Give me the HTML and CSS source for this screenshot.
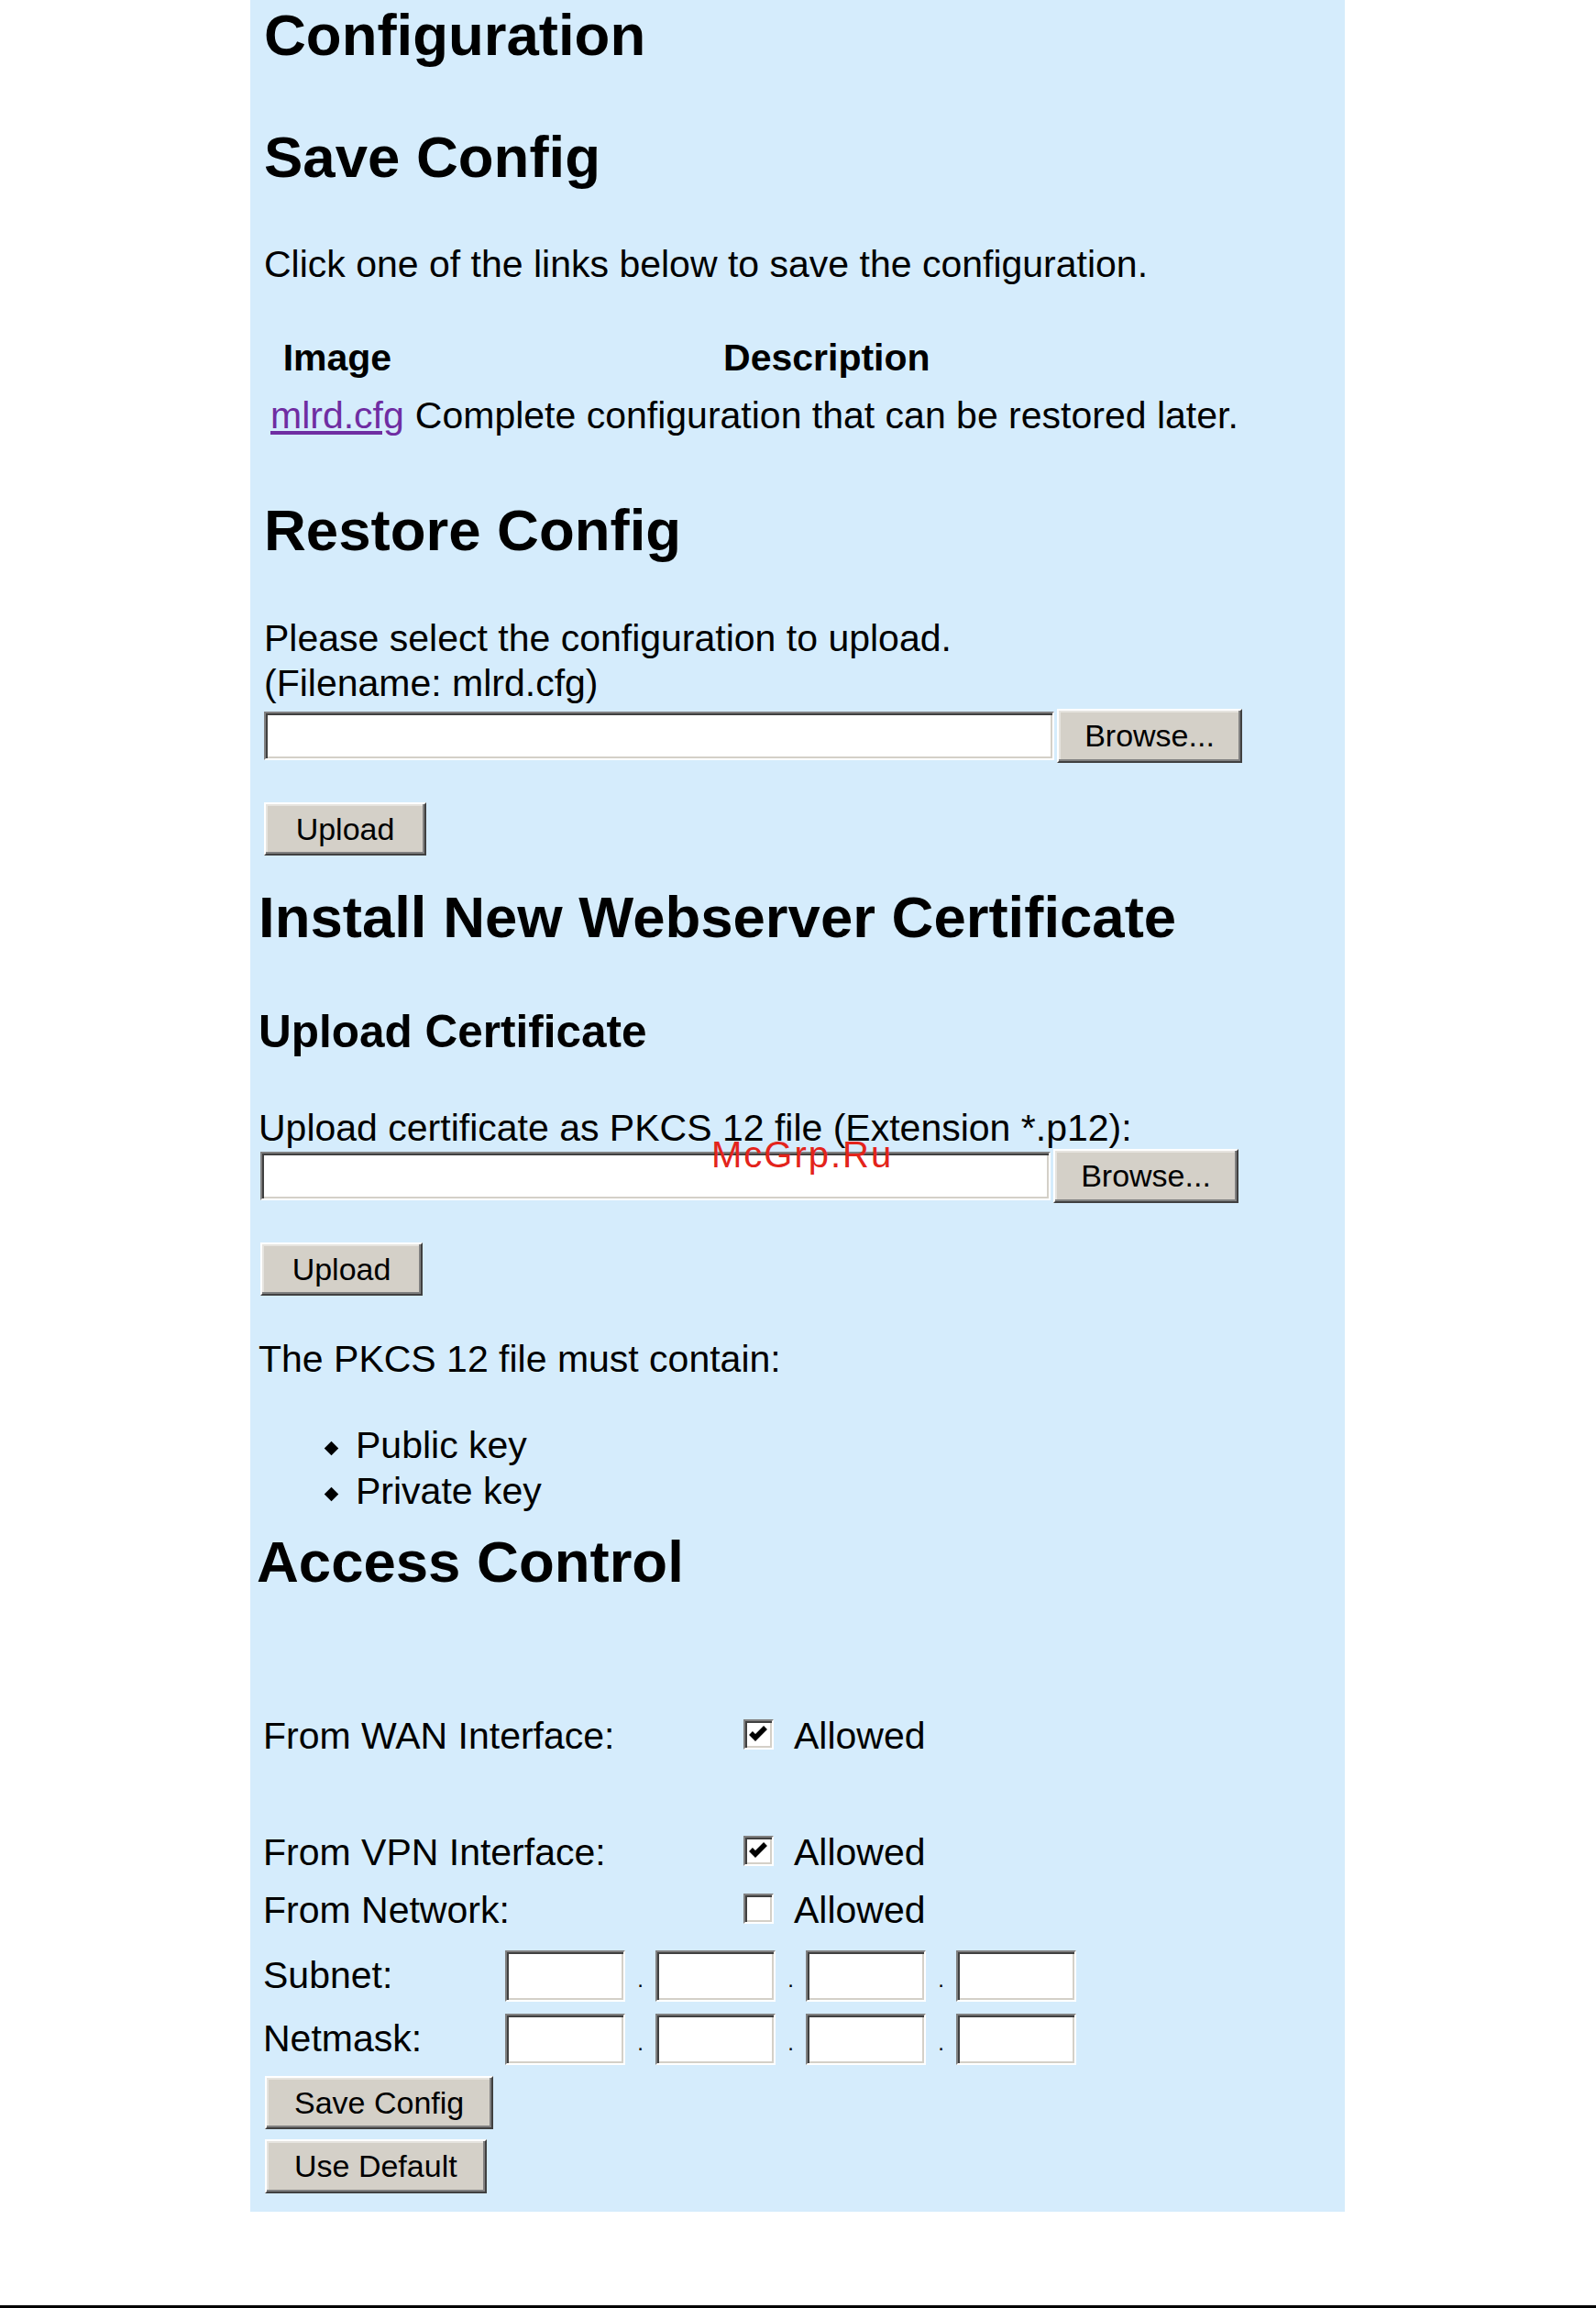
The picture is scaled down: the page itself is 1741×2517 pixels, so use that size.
FILE: index.html
```html
<!DOCTYPE html>
<html lang="en">
<head>
  <meta charset="UTF-8">
  <meta name="viewport" content="width=device-width, initial-scale=1.0">
  <title>Configuration</title>
  <link rel="stylesheet" href="styles.css">
</head>
<body>
  <div class="panel">
    <h1 class="page-title">Configuration</h1>

    <div class="block save">
      <h2 class="section-title save-title">Save Config</h2>
      <p class="save-text">Click one of the links below to save the configuration.</p>
      <table class="files">
        <tr>
          <th>Image</th>
          <th>Description</th>
        </tr>
        <tr>
          <td><a href="#" class="file-link">mlrd.cfg</a></td>
          <td>Complete configuration that can be restored later.</td>
        </tr>
      </table>
    </div>

    <div class="block restore">
      <h2 class="section-title restore-title">Restore Config</h2>
      <p class="restore-text">Please select the configuration to upload.<br>(Filename: mlrd.cfg)</p>
      <div class="file-row">
        <input type="text" class="field">
        <button class="btn browse">Browse...</button>
      </div>
      <button class="btn upload">Upload</button>
    </div>

    <div class="cert">
      <h1 class="section-title cert-title">Install New Webserver Certificate</h1>
      <h3 class="sub-title">Upload Certificate</h3>
      <p class="cert-text">Upload certificate as PKCS 12 file (Extension *.p12):</p>
      <div class="file-row">
        <input type="text" class="field">
        <button class="btn browse">Browse...</button>
      </div>
      <button class="btn upload">Upload</button>
      <p class="pkcs-text">The PKCS 12 file must contain:</p>
      <ul class="keys">
        <li>Public key</li>
        <li>Private key</li>
      </ul>
    </div>

    <div class="access">
      <h1 class="section-title access-title">Access Control</h1>

      <div class="acc-list">
        <div class="acc-row">
          <div class="acc-label">From WAN Interface:</div>
          <span class="check"><svg viewBox="0 0 25 25" width="25" height="25"><polyline points="4,11 9,16 20,5"/></svg></span>
          <span class="allowed">Allowed</span>
        </div>
        <div class="acc-row blank"></div>
        <div class="acc-row">
          <div class="acc-label">From VPN Interface:</div>
          <span class="check"><svg viewBox="0 0 25 25" width="25" height="25"><polyline points="4,11 9,16 20,5"/></svg></span>
          <span class="allowed">Allowed</span>
        </div>
        <div class="acc-row">
          <div class="acc-label">From Network:</div>
          <span class="check"></span>
          <span class="allowed">Allowed</span>
        </div>
      </div>

      <div class="ip-list">
        <div class="ip-row">
          <div class="ip-label">Subnet:</div>
          <input type="text" class="octet"><span class="dot">.</span>
          <input type="text" class="octet"><span class="dot">.</span>
          <input type="text" class="octet"><span class="dot">.</span>
          <input type="text" class="octet">
        </div>
        <div class="ip-row">
          <div class="ip-label">Netmask:</div>
          <input type="text" class="octet"><span class="dot">.</span>
          <input type="text" class="octet"><span class="dot">.</span>
          <input type="text" class="octet"><span class="dot">.</span>
          <input type="text" class="octet">
        </div>
      </div>

      <div class="actions">
        <button class="btn save-btn">Save Config</button>
        <button class="btn default-btn">Use Default</button>
      </div>
    </div>
  </div>

  <div class="spacer"></div>
  <div class="rule"></div>

  <div class="watermark">McGrp.Ru</div>
</body>
</html>
```

FILE: styles.css
```css
body {
  margin: 0;
  min-height: 100vh;
  display: flex;
  flex-direction: column;
  position: relative;
  font-family: "Liberation Sans", Arial, sans-serif;
  font-size: 41px;
  line-height: 49px;
  color: #000;
  background-color: #fff;
}

h1, h2, h3, p, ul, table {
  margin: 0;
}

.panel {
  margin-left: 273px;
  width: 1194px;
  box-sizing: border-box;
  padding: 2px 0 20px 7px;
  background-color: #d5ecfc;
}

.page-title,
.section-title {
  font-size: 63.5px;
  line-height: 72px;
  font-weight: bold;
}

.page-title {
  margin-left: 8px;
}

.sub-title {
  font-size: 49.5px;
  line-height: 56px;
  font-weight: bold;
  margin-top: 61px;
}

.block {
  padding-left: 8px;
}

/* Save Config */
.save-title { margin-top: 61px; }
.save-text { margin-top: 57px; }

.files {
  margin-top: 44px;
  margin-left: -1px;
  border-collapse: separate;
  border-spacing: 4px;
}

.files th,
.files td {
  padding: 5px 4px;
  font-size: 41px;
  line-height: 49px;
}

.files th {
  font-weight: bold;
  text-align: center;
}

.file-link {
  color: #6f2da2;
}

/* Restore Config */
.restore-title { margin-top: 55px; }
.restore-text { margin-top: 58px; }

.file-row {
  display: flex;
  align-items: center;
  gap: 3px;
  margin-top: 3px;
}

.field,
.octet {
  box-sizing: border-box;
  margin: 0;
  padding: 0 6px;
  font: inherit;
  background-color: #fff;
  border: 2px solid;
  border-color: #808080 #fff #fff #808080;
  box-shadow: inset 2px 2px 0 #404040, inset -2px -2px 0 #d4d0c8;
  outline: none;
}

.field {
  width: 862px;
  height: 53px;
}

.btn {
  display: block;
  box-sizing: border-box;
  height: 58px;
  margin: 0;
  padding: 0 30px;
  font-family: "Liberation Sans", Arial, sans-serif;
  font-size: 34px;
  color: #000;
  background-color: #d4d0c8;
  border: 2px solid;
  border-color: #fff #404040 #404040 #fff;
  border-radius: 0;
  box-shadow: inset -2px -2px 0 #808080, inset 2px 2px 0 #e6e4df;
  cursor: pointer;
}

.browse {
  width: 202px;
  height: 59px;
  padding: 0;
}

.upload {
  min-width: 177px;
  margin-top: 43px;
}

/* Certificate */
.cert {
  padding-left: 2px;
}

.cert-title { margin-top: 31px; }
.cert-text { margin-top: 53px; }

.cert .file-row {
  margin-top: -2px;
  margin-left: 2px;
}

.cert .upload {
  margin-left: 2px;
}

.pkcs-text { margin-top: 45px; }

.keys {
  margin-top: 44px;
  padding-left: 106px;
  list-style: none;
}

.keys li {
  line-height: 50px;
}

.keys li::before {
  content: "";
  display: inline-block;
  width: 11px;
  height: 11px;
  margin: 0 21px 0 -32px;
  background-color: #000;
  transform: rotate(45deg);
  vertical-align: middle;
}

/* Access Control */
.access-title { margin-top: 16px; }

.acc-list {
  margin-top: 123px;
  margin-left: 7px;
}

.acc-row {
  display: flex;
  align-items: center;
  height: 63px;
}

.acc-row.blank {
  height: 64px;
}

.acc-label {
  flex: 0 0 524px;
}

.check {
  box-sizing: border-box;
  width: 33px;
  height: 33px;
  margin-bottom: 4px;
  display: flex;
  align-items: center;
  justify-content: center;
  background-color: #fff;
  border: 2px solid;
  border-color: #808080 #fff #fff #808080;
  box-shadow: inset 2px 2px 0 #404040, inset -2px -2px 0 #d4d0c8;
}

.check polyline {
  fill: none;
  stroke: #000;
  stroke-width: 5.5;
  stroke-linejoin: miter;
}

.allowed {
  margin-left: 22px;
}

.ip-list {
  margin-top: 5px;
  margin-left: 7px;
}

.ip-row {
  display: flex;
  align-items: center;
  height: 69px;
}

.ip-label {
  flex: 0 0 264px;
}

.octet {
  width: 131px;
  height: 56px;
}

.dot {
  width: 33px;
  margin-top: 8px;
  text-align: center;
  font-size: 24px;
  line-height: 24px;
}

.actions {
  margin-left: 9px;
}

.save-btn {
  margin-top: 6px;
}

.default-btn {
  margin-top: 11px;
  height: 59px;
}

.spacer {
  flex: 1;
}

.rule {
  height: 3px;
  background-color: #000;
}

.watermark {
  position: absolute;
  left: 776px;
  top: 1239px;
  font-size: 40px;
  line-height: 40px;
  letter-spacing: 2px;
  color: #e3241b;
}
```
